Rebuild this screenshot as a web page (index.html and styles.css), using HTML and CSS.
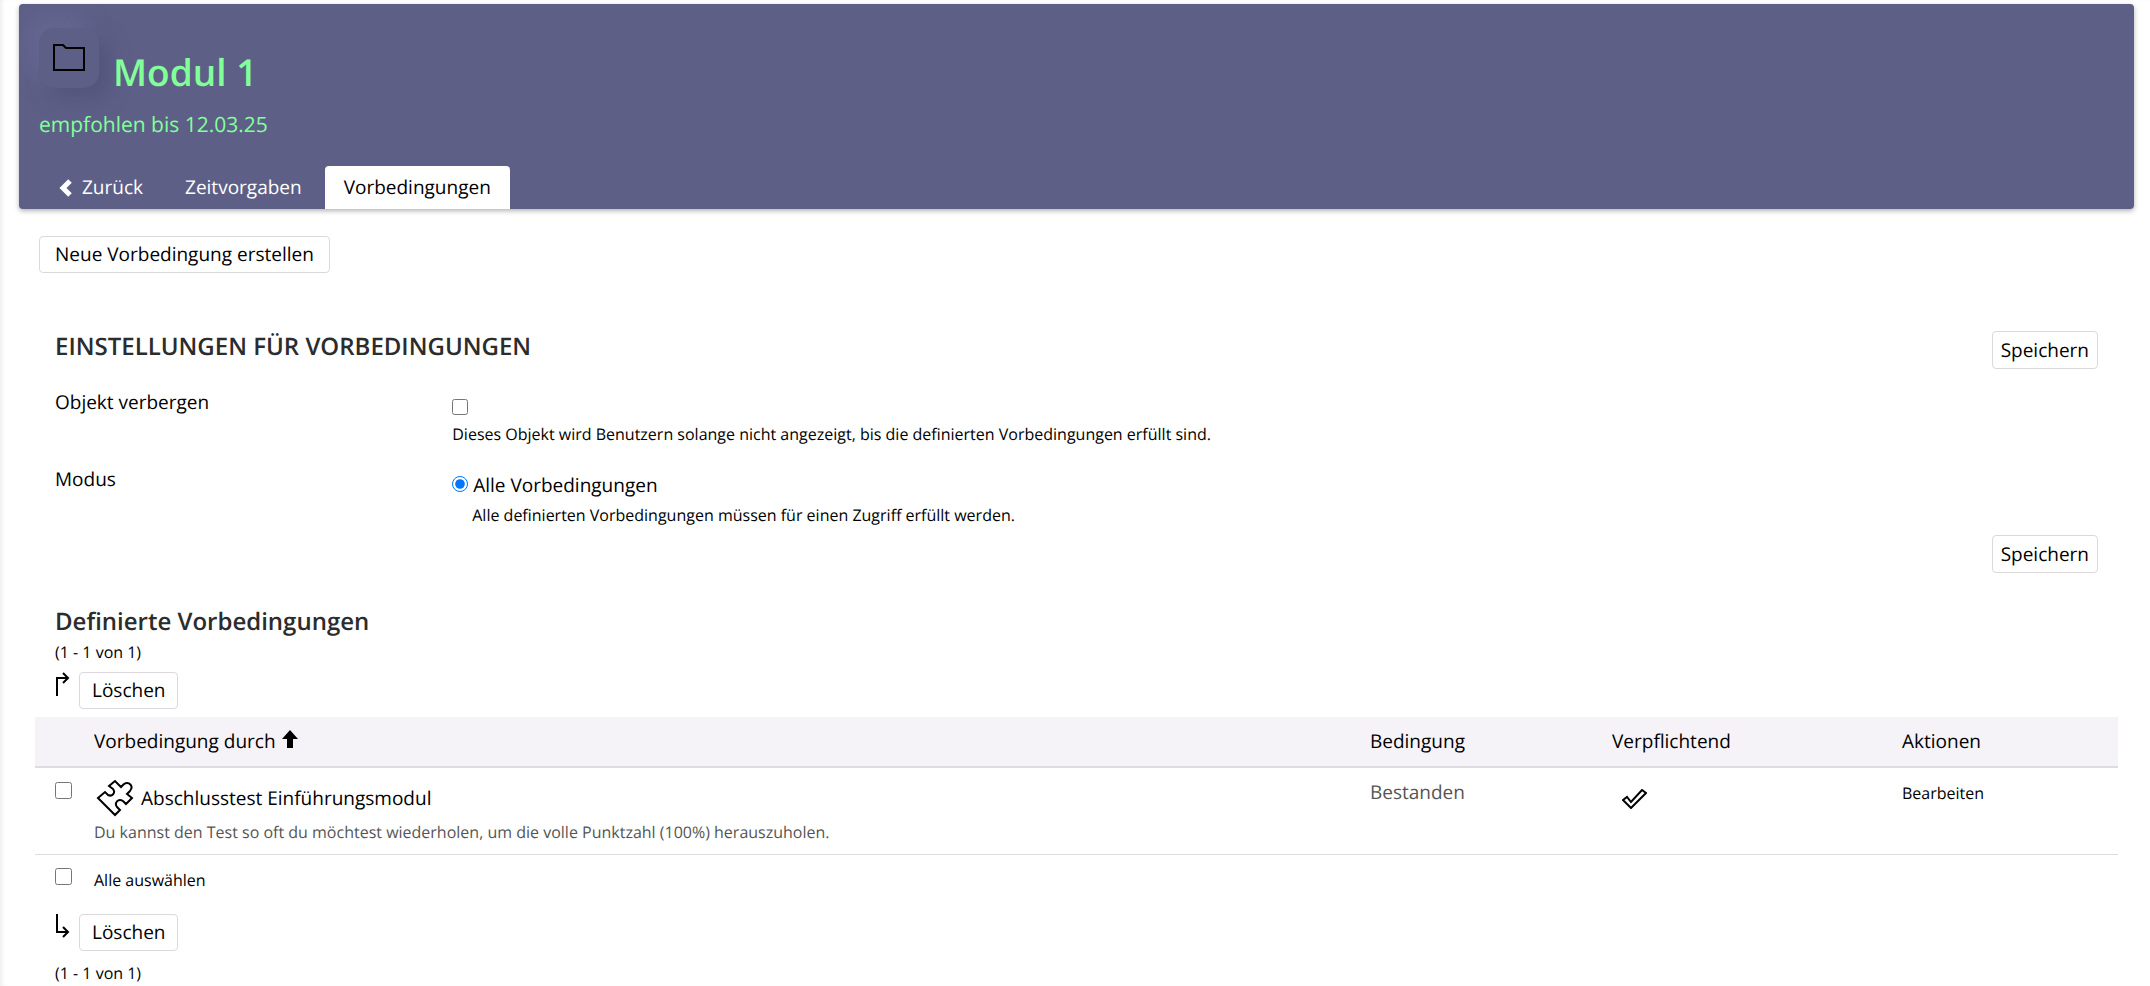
FILE: index.html
```html
<!DOCTYPE html>
<html lang="de">
	<head>
		<meta charset="UTF-8">
		<title>Modul 1 - Vorbedingungen</title>
		<link rel="stylesheet" href="styles.css">
	</head>
	<body>
		<header class="head">
			<div class="title">
				<span class="icon">
					<svg width="34" height="28" viewBox="0 0 34 28"><path d="M2 1h9l3 3h18v22H2z"/></svg>
				</span>
				<h1>Modul 1</h1>
			</div>
			<p class="until">empfohlen bis 12.03.25</p>
			<nav class="tabs">
				<a href="#"><svg class="back" width="14" height="18" viewBox="0 0 14 18"><path d="M12 2L5 9l7 7"/></svg>Zurück</a>
				<a href="#">Zeitvorgaben</a>
				<a href="#" class="active">Vorbedingungen</a>
			</nav>
		</header>
		<main>
			<div class="toolbar">
				<button type="button" class="btn">Neue Vorbedingung erstellen</button>
			</div>
			<form class="settings">
				<div class="form-head">
					<h2>EINSTELLUNGEN FÜR VORBEDINGUNGEN</h2>
					<button type="button" class="btn save">Speichern</button>
				</div>
				<div class="row">
					<label for="hide">Objekt verbergen</label>
					<div class="field">
						<input type="checkbox" id="hide">
						<p>Dieses Objekt wird Benutzern solange nicht angezeigt, bis die definierten Vorbedingungen erfüllt sind.</p>
					</div>
				</div>
				<div class="row">
					<span>Modus</span>
					<div class="field mode">
						<input type="radio" id="all" name="mode" checked>
						<label for="all">Alle Vorbedingungen</label>
						<p>Alle definierten Vorbedingungen müssen für einen Zugriff erfüllt werden.</p>
					</div>
				</div>
				<div class="form-foot">
					<button type="button" class="btn save">Speichern</button>
				</div>
			</form>
			<section class="list">
				<h2>Definierte Vorbedingungen</h2>
				<p class="count">(1 - 1 von 1)</p>
				<div class="cmd">
					<svg width="16" height="24" viewBox="0 0 16 24"><path d="M2 24V6h11M8 1l5 5-5 5"/></svg>
					<button type="button" class="btn">Löschen</button>
				</div>
				<table>
					<thead>
						<tr>
							<th class="c-check"></th>
							<th class="c-name"><a href="#">Vorbedingung durch<svg class="up" width="16" height="18" viewBox="0 0 16 18"><path d="M8 0l8 9h-5v9H5V9H0z"/></svg></a></th>
							<th class="c-cond">Bedingung</th>
							<th class="c-req">Verpflichtend</th>
							<th class="c-act">Aktionen</th>
						</tr>
					</thead>
					<tbody>
						<tr>
							<td><input type="checkbox" id="item" aria-label="Abschlusstest Einführungsmodul"></td>
							<td>
								<div class="item">
									<svg width="38" height="38" viewBox="0 0 38 38"><path d="M2 19l7-6 3 3c4 2 8-2 5-6l-4-3 6-5 6 6 3-3c5-3 10 2 6 7l-3 3 5 4-6 6-3-3c-5-3-9 2-6 6l3 3-5 5z"/></svg>
									<a href="#">Abschlusstest Einführungsmodul</a>
								</div>
								<p>Du kannst den Test so oft du möchtest wiederholen, um die volle Punktzahl (100%) herauszuholen.</p>
							</td>
							<td>Bestanden</td>
							<td><svg class="check" width="25" height="20" viewBox="0 0 25 20"><path d="M1 11l4-3 4 5L20 1l4 3L9 19z"/></svg></td>
							<td><a href="#" class="small">Bearbeiten</a></td>
						</tr>
					</tbody>
				</table>
				<div class="select-all">
					<input type="checkbox" id="select-all">
					<label for="select-all">Alle auswählen</label>
				</div>
				<div class="cmd">
					<svg width="16" height="24" viewBox="0 0 16 24"><path d="M2 0v18h11M8 13l5 5-5 5"/></svg>
					<button type="button" class="btn">Löschen</button>
				</div>
				<p class="count">(1 - 1 von 1)</p>
			</section>
		</main>
	</body>
</html>
```
FILE: styles.css
```css
*{
	margin:0;
	padding:0;
	box-sizing:border-box;
}
body{
	min-height:100vh;
	padding:4px 16px 0 19px;
	background:#fff;
	color:#000;
	font:19px/27px "Open Sans",sans-serif;
	text-rendering:geometricPrecision;
	box-shadow:inset 4px 0 4px -2px #eee;
}
a{
	color:inherit;
	text-decoration:none;
}
svg{
	fill:none;
	stroke:#000;
	stroke-width:2;
	flex:none;
}
.head{
	padding:24px 20px 0;
	background:#5d5f87;
	border-radius:4px;
	box-shadow:0 2px 5px rgba(0,0,0,.3);
	color:#82ff99;
	overflow:hidden;
}
.title{
	display:flex;
	gap:14px;
}
.icon{
	display:flex;
	align-items:center;
	justify-content:center;
	width:60px;
	height:60px;
	border-radius:15px;
	box-shadow:10px 10px 20px #53557a,-10px -10px 20px #676994;
}
h1{
	margin-top:18px;
	font-size:37px;
	line-height:52px;
	font-weight:600;
}
.until{
	margin-top:12px;
	font-size:21px;
	line-height:30px;
}
.tabs{
	display:flex;
	gap:4px;
	margin-top:26px;
	color:#fff;
}
.tabs a{
	display:flex;
	align-items:center;
	gap:10px;
	height:43px;
	padding:0 19px;
}
.tabs .active{
	background:#fff;
	color:#000;
	border-radius:4px 4px 0 0;
}
.back{
	stroke:#fff;
	stroke-width:5;
}
.btn{
	height:37px;
	padding:0 12px;
	background:#fff;
	border:1px solid #ddd8de;
	border-radius:4px;
	color:#000;
	font:inherit;
	text-rendering:inherit;
}
.btn.save{
	height:38px;
	padding:0 8px;
}
.toolbar{
	padding:27px 20px 0;
}
.toolbar .btn{
	padding:0 15px;
}
.settings{
	padding:58px 36px 0;
}
h2{
	color:#2c2c2c;
	font-size:24px;
	line-height:32px;
	font-weight:600;
}
.form-head{
	display:flex;
	justify-content:space-between;
}
.row{
	display:grid;
	grid-template-columns:7fr 29fr;
	margin-top:20px;
}
.field{
	padding-top:6px;
}
.field p,
.count,
.small,
.list td p,
.select-all{
	font-size:16px;
	line-height:24px;
}
input{
	width:16px;
	height:16px;
	accent-color:#0075ff;
}
.mode p{
	margin-top:4px;
	padding-left:20px;
}
.form-foot{
	display:flex;
	justify-content:flex-end;
	margin-top:8px;
}
.list{
	padding:33px 16px 0;
}
.list h2,
.count,
.cmd,
.select-all{
	padding-left:20px;
}
.list input{
	width:17px;
	height:17px;
}
.count{
	margin-top:2px;
}
.cmd{
	display:flex;
	gap:8px;
	margin:8px 0;
}
table{
	width:100%;
	table-layout:fixed;
	border-collapse:collapse;
}
th{
	height:50px;
	background:#f5f3f7;
	border-bottom:2px solid #ddd;
	font-weight:400;
	text-align:left;
}
td{
	padding:11px 0 10px;
	border-bottom:1px solid #ddd;
	color:#555;
	vertical-align:top;
}
td a{
	color:#000;
}
td:first-child{
	padding-left:20px;
}
.c-check{
	width:59px;
}
.c-cond{
	width:242px;
}
.c-req{
	width:290px;
}
.c-act{
	width:216px;
}
.up{
	margin-left:6px;
	fill:#000;
	stroke:none;
}
.item{
	display:flex;
	align-items:center;
	gap:7px;
	padding:0 0 3px 2px;
}
.check{
	margin:10px 0 0 10px;
}
.select-all{
	display:flex;
	gap:22px;
	padding-top:13px;
	padding-bottom:14px;
}
.select-all + .cmd{
	margin-bottom:10px;
}
```
